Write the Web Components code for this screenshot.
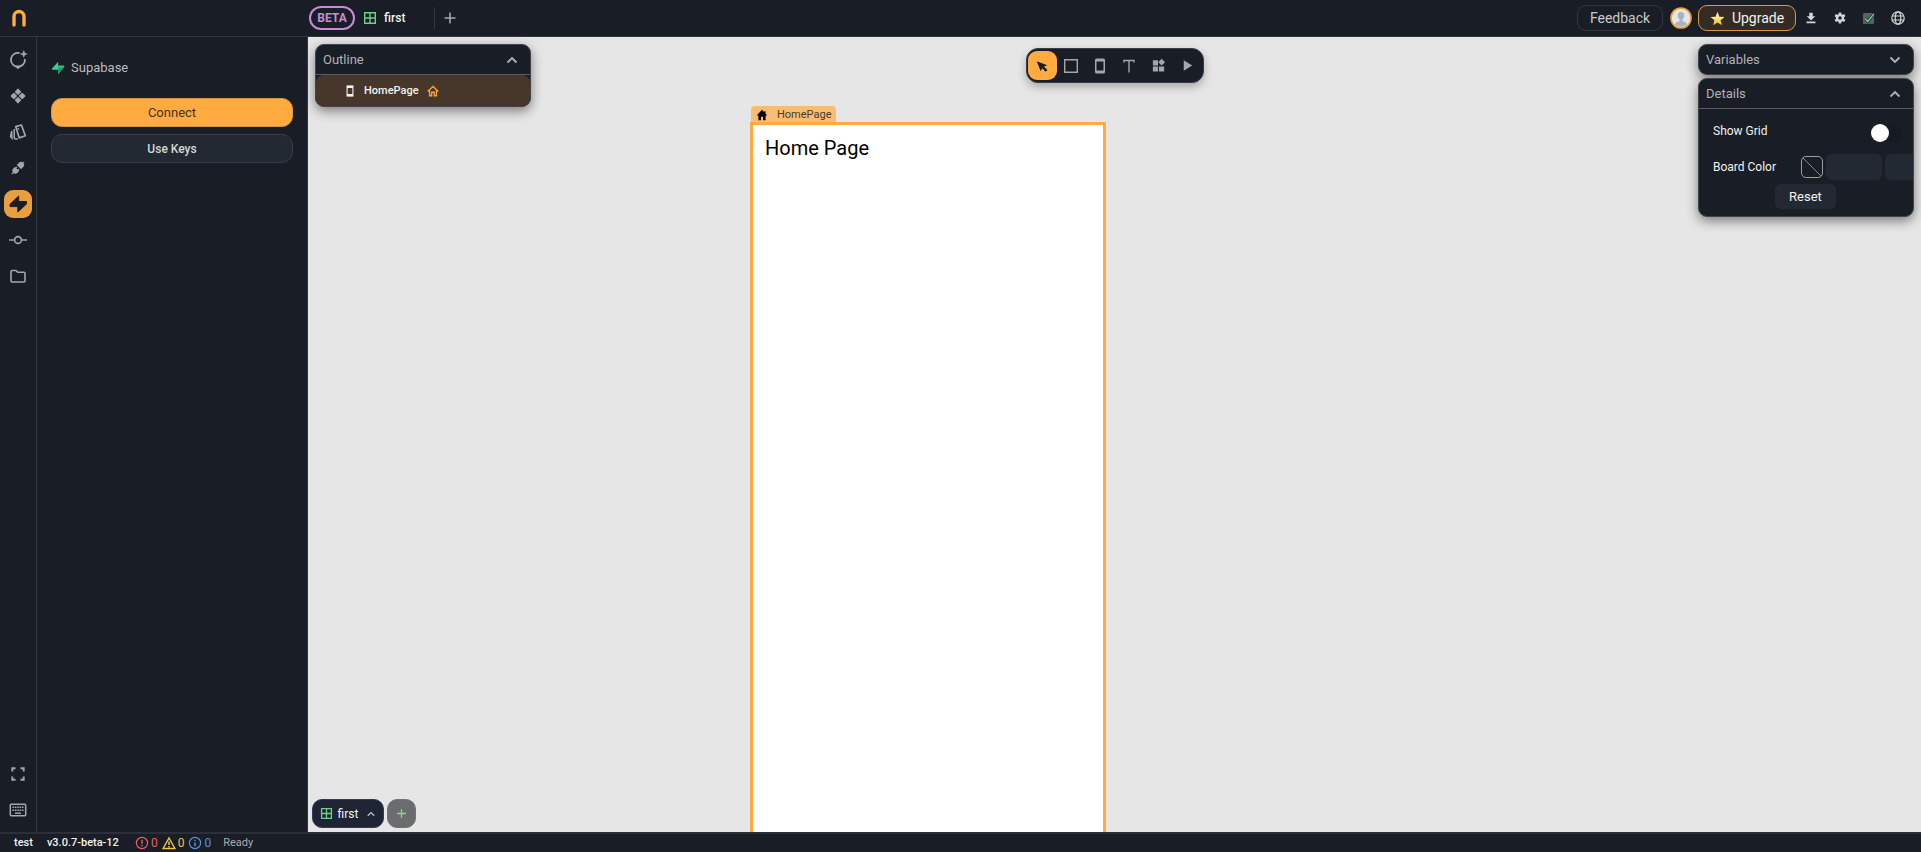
<!DOCTYPE html>
<html lang="en">
<head>
<meta charset="utf-8">
<title>first</title>
<style>
  html, body { height: 100%; margin: 0; }
  body {
    --bg: #191d25; --line: #33363f; --accent: #ffab40; --field: #232933; --muted: #a4a6a8; --text: #f2f2f0;
    background: #e6e6e6; color: var(--text);
    font-family: Roboto, "Liberation Sans", sans-serif; font-size: 13px; line-height: 16px;
    overflow: hidden;
  }
</style>
</head>
<body>
<app-shell></app-shell>

<script>
// every glyph lives here, name -> [viewBox, markup]
const ICONS = {
  logo: ['0 0 14 18', '<path d="M2 16V7.5a5 5 0 0 1 10 0V16" fill="none" stroke="currentColor" stroke-width="3.4" stroke-linecap="round"/>'],
  chat: ['0 0 18 18', '<path d="M10.500 2A7 7 0 1 0 15.900 8" fill="none" stroke="currentColor" stroke-width="1.8"/><path d="M5.500 14.800h7L9 18z M14.800-.5l1 2.500 2.500 1-2.500 1-1 2.500-1-2.500-2.500-1 2.500-1z" fill="currentColor" stroke="currentColor" stroke-width=".4"/>'],
  diamonds: ['0 0 18 18', '<path d="M9 1.300l3 3-3 3-3-3z M4.300 6l3 3-3 3-3-3z M13.700 6l3 3-3 3-3-3z M9 10.700l3 3-3 3-3-3z" fill="currentColor" stroke="currentColor" stroke-width="1.2" stroke-linejoin="round"/>'],
  cards: ['0 0 18 18', '<g fill="none" stroke="currentColor"><path d="M6.700 3.600L12.400 2 16.300 12.800 10.300 14.900z" stroke-width="1.700" stroke-linejoin="round"/><path d="M5.200 6v8.500q0 1.500 1.500 1.500h2" stroke-width="1.500"/><path d="M2.700 8L1.500 13.500l1.500 1.700z" stroke-width="1.400"/></g><circle cx="9.300" cy="5.800" r=".9" fill="currentColor"/>'],
  plug: ['0 0 18 18', '<g transform="rotate(45 9 9)" fill="currentColor"><path d="M8.100-4h1.800V-.5h-1.800z M9-2c2.600 0 4.500 1.500 4.500 4V7h-9V2c0-2.500 1.900-4 4.500-4z M5.800 9h1.800v2h2.800V9h1.800v2h1.300V15c0 2.500-1.900 4-4.500 4s-4.500-1.500-4.500-4v-4h1.300z M8.100 18.500h1.800v3.500h-1.800z"/></g>'],
  bolt: ['0 0 18 18', '<path d="M9.700 1L1 9.200V11.600h7.800V17L17.500 9V6.500H9.700z" fill="#191d25" stroke="#191d25" stroke-linejoin="round"/>'],
  commit: ['0 0 18 18', '<path d="M0 9h5.500M12.500 9H18" stroke="currentColor" stroke-width="1.600"/><circle cx="9" cy="9" r="3.400" fill="none" stroke="currentColor" stroke-width="1.600"/>'],
  folder: ['0 0 18 18', '<path d="M2 14V4.500q0-1 1-1h4l1.700 1.700H15q1 0 1 1V14q0 1-1 1H3q-1 0-1-1z" fill="none" stroke="currentColor" stroke-width="1.600"/>'],
  expand: ['0 0 18 18', '<path d="M3.300 6.500V3.300h3.200M11.500 3.300h3.200v3.200M14.700 11.500v3.200h-3.200M6.500 14.700H3.300v-3.200" fill="none" stroke="currentColor" stroke-width="1.900"/>'],
  keyboard: ['0 0 18 18', '<rect x="1.300" y="3.300" width="15.400" height="11.400" rx="1" fill="none" stroke="currentColor" stroke-width="1.500"/><path d="M3.500 6.300h11M3.500 9.300h11" stroke="currentColor" stroke-width="1.600" stroke-dasharray="1.600 .75"/><path d="M6 12.200h6" stroke="currentColor" stroke-width="1.400"/>'],
  supabase: ['0 0 14 14', '<path d="M7.200.8L.8 7.700q-.5 1 .5 1H7.200z" fill="#3ecf8e"/><path d="M7.200 13.300V4.500H12.800q1 .2.400 1.200z" fill="#38bd82"/><path d="M7.200 13.300V9L9 6.500 12.500 7z" fill="#249361"/>'],
  grid: ['0 0 14 14', '<path d="M1.700 1.700h10.600v10.600H1.700z M7 1.700v10.600M1.700 7h10.600" fill="none" stroke="#6fd08c" stroke-width="1.400"/>'],
  plus: ['0 0 14 14', '<path d="M7 1.500v11M1.500 7h11" stroke="currentColor" stroke-width="1.600"/>'],
  up: ['0 0 14 14', '<path d="M2.500 9.500L7 5l4.500 4.500" fill="none" stroke="currentColor" stroke-width="1.800"/>'],
  down: ['0 0 14 14', '<path d="M2.500 4.500L7 9l4.500-4.500" fill="none" stroke="currentColor" stroke-width="1.800"/>'],
  phone: ['0 0 14 14', '<path d="M3.600 1.300h6.800v11.400H3.600z" fill="none" stroke="currentColor" stroke-width="1.300"/><path d="M3.500 1h7v2.500h-7z M3.500 10.500h7V13h-7z" fill="currentColor"/>'],
  homeLine: ['0 0 14 14', '<path d="M.8 7.500L7 1.800l6.200 5.700M3 6.500v6h2.500v-4h3v4H11v-6" fill="none" stroke="#f7a23b" stroke-width="1.600"/>'],
  home: ['0 0 14 14', '<path d="M7 1L.8 7.500h2V13h3V9h2.400v4h3V7.500h2L11.200 5.500V2.500H9.500v1.200z" fill="#000"/>'],
  star: ['0 0 16 16', '<defs><linearGradient id="g" x2="0" y2="1"><stop offset=".3" stop-color="#fff3a0"/><stop offset="1" stop-color="#f8b713"/></linearGradient></defs><path d="M8 .8l2 5.200 5.500.3-4.200 3.500 1.400 5.400L8 12.200l-4.700 3 1.400-5.400L.5 6.300 6 6z" fill="url(#g)"/>'],
  avatar: ['0 0 22 22', '<circle cx="11" cy="11" r="10" fill="#e3e6ea"/><path d="M11 5c2.300 0 3.300 1.500 3.300 3.500 0 2-1 3.500-2 4.200v1.300l4.200 1.800v2.200a10 10 0 0 1-11 0v-2.200l4.200-1.800v-1.300c-1-.7-2-2.200-2-4.200C7.700 6.500 8.700 5 11 5z" fill="#aab3bf"/><circle cx="11" cy="11" r="10" fill="none" stroke="#f29b38" stroke-width="1.700"/>'],
  download: ['0 0 14 14', '<path d="M5 .8h4V5h3L7 10 2 5h3z M1.800 11.200h10.400v2H1.800z" fill="currentColor"/>'],
  gear: ['0 0 14 14', '<circle cx="7" cy="7" r="3.400" fill="none" stroke="currentColor" stroke-width="2.800"/><path d="M7 .5v2.200M7 11.300v2.200M1.400 3.700l1.900 1.100M10.700 9.200l1.900 1.100M1.400 10.300l1.900-1.100M10.700 4.800l1.900-1.100" stroke="currentColor" stroke-width="3"/>'],
  check: ['0 0 14 14', '<rect x="1" y="1" width="12" height="12" rx="1.500" fill="#5b5f66"/><path d="M3 7l3.200 3.300L12.800 2" fill="none" stroke="#191d25" stroke-width="3"/><path d="M3 7l3.200 3.300L12.800 2" fill="none" stroke="#6ddd7c" stroke-width="1.600"/>'],
  globe: ['0 0 14 14', '<g fill="none" stroke="currentColor" stroke-width="1.200"><circle cx="7" cy="7" r="6.200"/><ellipse cx="7" cy="7" rx="2.800" ry="6.200"/><path d="M1.200 5h11.600M1.200 9h11.600"/></g>'],
  cursor: ['0 0 16 16', '<path d="M2 2.500l12 4.500-3.800 1.700 4 4-2 2-4-4L6.500 14z" fill="#191d25"/>'],
  square: ['0 0 16 16', '<path d="M1.700 1.700h12.600v12.600H1.700z" fill="none" stroke="currentColor" stroke-width="1.400"/>'],
  mobile: ['0 0 16 16', '<path d="M4.500.5h7q1.500 0 1.500 1.500v12q0 1.500-1.500 1.500h-7Q3 15.500 3 14V2Q3 .5 4.500.5z M4.500 3.500v9h7v-9z" fill="currentColor" fill-rule="evenodd"/>'],
  type: ['0 0 16 16', '<path d="M3 4.500V2.500h10v2M8 2.500v12" fill="none" stroke="currentColor" stroke-width="1.400"/>'],
  widgets: ['0 0 16 16', '<path d="M2 2.500h5.500V8H2z M2 9h5.500v5.500H2z M8.500 9H14v5.500H8.500z M11.300.7l3.700 3.700-3.700 3.700L7.800 4.400z" fill="currentColor"/>'],
  play: ['0 0 16 16', '<path d="M4 2.500L13 8l-9 5.500z" fill="currentColor"/>'],
  error: ['0 0 14 14', '<g fill="none" stroke="#ee5f66" stroke-width="1.200"><circle cx="7" cy="7" r="5.600"/><path d="M7 3.700v4M7 8.800v1.400" stroke-width="1.400"/></g>'],
  warn: ['0 0 14 14', '<path d="M7 2l5.900 10.500H1.100z" fill="none" stroke="#f3c24b" stroke-width="1.400"/><path d="M7 5.500v3.500M7 10v1.500" stroke="#f3c24b" stroke-width="1.500"/>'],
  info: ['0 0 14 14', '<g fill="none" stroke="#5d8fe0" stroke-width="1.200"><circle cx="7" cy="7" r="5.600"/><path d="M7 3.700v1.400M7 6.300v4" stroke-width="1.400"/></g>'],
};

function define(name, html, setup) {
  const template = document.createElement('template');
  template.innerHTML = html;
  customElements.define(name, class extends HTMLElement {
    constructor() {
      super();
      this.attachShadow({ mode: 'open' }).append(template.content.cloneNode(true));
    }
    connectedCallback() {
      if (setup) setup(this, this.shadowRoot);
    }
  });
}

function makeIcon(name, size) {
  const icon = document.createElement('ui-icon');
  icon.setAttribute('name', name);
  icon.setAttribute('size', size);
  return icon;
}

define('ui-icon', '<style>:host{display:block;flex:none;line-height:0}svg{display:block;overflow:visible}</style><span></span>', (el, root) => {
  const [box, body] = ICONS[el.getAttribute('name')];
  const size = el.getAttribute('size') || 14;
  root.querySelector('span').innerHTML = `<svg viewBox="${box}" width="${size}" height="${size}" aria-hidden="true">${body}</svg>`;
});

// icon-only button, used in the rail, toolbar and top bar
define('icon-button', `
<style>
  :host { display: grid; place-items: center; width: 29px; height: 29px; color: var(--muted); flex: none; }
  button { display: grid; place-items: center; width: 100%; height: 100%; padding: 0; border: 0; background: none; color: inherit; }
  :host([active]) button { background: var(--accent); border-radius: 9px; }
</style>
<button></button>`, (el, root) => {
  const button = root.querySelector('button');
  button.setAttribute('aria-label', el.getAttribute('label'));
  button.replaceChildren(makeIcon(el.getAttribute('icon'), el.getAttribute('size') || 16));
});

define('top-bar', `
<style>
  :host { display: flex; align-items: center; height: 36px; border-bottom: 1px solid var(--line); background: var(--bg); }
  .logo { width: 309px; box-sizing: border-box; padding-left: 10px; flex: none; color: var(--accent); }
  .beta { box-sizing: border-box; width: 46px; height: 24px; border: 2px solid #c88ad8; border-radius: 12px; color: #c88ad8; font-weight: 700; font-size: 12px; line-height: 20px; text-align: center; }
  .tab { display: flex; align-items: center; gap: 7px; width: 71px; height: 22px; margin-left: 8px; border-right: 1px solid var(--line); font-size: 12px; font-weight: 500; }
  .add { color: var(--muted); }
  .right { display: flex; align-items: center; margin-left: auto; padding-right: 9px; }
  button { box-sizing: border-box; height: 26px; border: 1px solid var(--line); border-radius: 9px; background: var(--bg); color: #c9cacb; font: 14px/16px Roboto, sans-serif; padding: 0; }
  .feedback { width: 86px; margin-right: 7px; }
  .upgrade { display: flex; align-items: center; justify-content: center; gap: 7px; width: 98px; margin-left: 6px; border-color: #e3963a; background: #342b24; color: var(--text); }
  .right icon-button { color: #d6d6d6; }
</style>
<div class="logo"><ui-icon name="logo" size="18"></ui-icon></div>
<div class="beta">BETA</div>
<div class="tab"><ui-icon name="grid"></ui-icon>first</div>
<icon-button class="add" icon="plus" size="14" label="New tab"></icon-button>
<div class="right">
  <button class="feedback">Feedback</button>
  <ui-icon name="avatar" size="22"></ui-icon>
  <button class="upgrade"><ui-icon name="star" size="15"></ui-icon>Upgrade</button>
  <icon-button icon="download" size="12" label="Download"></icon-button>
  <icon-button icon="gear" size="12" label="Settings"></icon-button>
  <icon-button icon="check" size="13" label="Saved"></icon-button>
  <icon-button icon="globe" size="14" label="Publish"></icon-button>
</div>`);

define('side-rail', `
<style>
  :host { display: flex; flex-direction: column; box-sizing: border-box; width: 37px; padding: 9px 5px 8px 4px; gap: 8px; border-right: 1px solid var(--line); background: var(--bg); }
  icon-button { width: 28px; height: 28px; }
  icon-button[active] { --accent: #e99f3f; }
  .last { margin-top: auto; }
</style>
<icon-button icon="chat" size="18" label="Assistant"></icon-button>
<icon-button icon="diamonds" label="Components"></icon-button>
<icon-button icon="cards" size="18" label="Styles"></icon-button>
<icon-button icon="plug" size="12" label="Connections"></icon-button>
<icon-button icon="bolt" size="18" label="Supabase" active></icon-button>
<icon-button icon="commit" size="18" label="Versions"></icon-button>
<icon-button icon="folder" size="18" label="Files"></icon-button>
<icon-button class="last" icon="expand" size="18" label="Full screen"></icon-button>
<icon-button icon="keyboard" size="18" label="Shortcuts"></icon-button>`);

define('supabase-panel', `
<style>
  :host { display: flex; flex-direction: column; gap: 7px; box-sizing: border-box; width: 271px; padding: 22px 14px; border-right: 1px solid var(--line); background: var(--bg); }
  h2 { display: flex; align-items: center; gap: 6px; margin: 0 0 15px; height: 17px; color: #bbbcbd; font-size: 13px; font-weight: 400; }
  button { height: 29px; box-sizing: border-box; border: 1px solid #383b44; border-radius: 11px; background: var(--field); color: #d6d6d6; font: 500 12px/16px Roboto, sans-serif; }
  .primary { border-color: #d49545; background: var(--accent); color: #3b332c; font-weight: 400; font-size: 13px; }
</style>
<h2><ui-icon name="supabase"></ui-icon>Supabase</h2>
<button class="primary">Connect</button>
<button>Use Keys</button>`);

// floating collapsible card
define('float-card', `
<style>
  :host { display: block; box-sizing: border-box; border: 1px solid #41444c; border-radius: 9px; background: var(--bg); overflow: hidden; box-shadow: 0 4px 12px #0007; }
  header { display: flex; align-items: center; justify-content: space-between; height: 29px; padding: 0 11px 0 7px; color: #b1b2b4; font-size: 13px; }
  .body { border-top: 1px solid #5b5d63; }
  :host(:not([open])) .body { display: none; }
</style>
<header><span></span></header>
<div class="body"><slot></slot></div>`, (el, root) => {
  root.querySelector('span').textContent = el.getAttribute('heading');
  root.querySelector('header').append(makeIcon(el.hasAttribute('open') ? 'up' : 'down', 14));
});

define('outline-card', `
<style>
  :host { display: block; }
  .row { display: flex; align-items: center; height: 31px; padding-left: 28px; gap: 8px; border-radius: 8px; background: #47372b; font-size: 11px; font-weight: 500; }
</style>
<float-card heading="Outline" open><div class="row"><ui-icon name="phone" size="12"></ui-icon>HomePage<ui-icon name="homeLine" size="12"></ui-icon></div></float-card>`);

define('details-cards', `
<style>
  :host { display: flex; flex-direction: column; gap: 3px; }
  .rows { display: flex; flex-direction: column; gap: 2px; padding: 5px 0 7px; }
  .row { display: flex; align-items: center; height: 34px; padding-left: 14px; font-size: 12px; }
  .pick { margin-bottom: -2px; }
  label { flex: none; width: 88px; }
  .toggle { appearance: none; display: flex; width: 31px; height: 18px; margin: 3px 11px 0 auto; border-radius: 9px; background: #161a21; }
  .toggle::before { content: ""; width: 18px; height: 18px; border-radius: 50%; background: #fff; }
  .swatch { flex: none; box-sizing: border-box; width: 22px; height: 22px; padding: 0; border: 1px solid #9b9c9e; border-radius: 5px; background: linear-gradient(to top right, transparent 48%, #85878a 49%, #85878a 51%, transparent 52%); }
  .text { flex: none; box-sizing: border-box; width: 56px; height: 26px; margin-left: 3px; border: 0; border-radius: 6px; background: var(--field); }
  .reset { width: 61px; height: 25px; margin-left: 76px; border: 0; border-radius: 6px; background: var(--field); color: var(--text); font: 13px/16px Roboto, sans-serif; }
</style>
<float-card heading="Variables"></float-card>
<float-card heading="Details" open>
  <div class="rows">
    <div class="row"><label for="grid">Show Grid</label><input class="toggle" type="checkbox" id="grid"></div>
    <div class="row pick"><label for="hex">Board Color</label><button class="swatch" aria-label="Pick color"></button><input class="text" id="hex"><input class="text" aria-label="Opacity"></div>
    <button class="reset">Reset</button>
  </div>
</float-card>`);

define('tool-bar', `
<style>
  :host { display: flex; padding: 2px 1px; border: 1px solid #3a3d45; border-radius: 12px; background: var(--bg); box-shadow: 0 4px 8px #0004; }
</style>
<icon-button icon="cursor" size="14" label="Select" active></icon-button>
<icon-button icon="square" label="Box"></icon-button>
<icon-button icon="mobile" label="Page"></icon-button>
<icon-button icon="type" label="Text"></icon-button>
<icon-button icon="widgets" size="15" label="Widgets"></icon-button>
<icon-button icon="play" size="15" label="Run"></icon-button>`);

define('page-node', `
<style>
  :host { display: flex; flex-direction: column; align-items: flex-start; color: #000; }
  .tag { display: flex; align-items: center; gap: 9px; box-sizing: border-box; height: 16px; margin-left: 1px; padding: 1px 5px 0; border-radius: 4px 4px 0 0; background: #f8bd72; color: #4b3b28; font-size: 11px; }
  .frame { box-sizing: border-box; width: 100%; flex: 1; padding: 11px 12px; border: solid var(--accent); border-width: 3px 3px 0; background: #fff; font-size: 20px; line-height: 24px; }
</style>
<div class="tag"><ui-icon name="home" size="12"></ui-icon>HomePage</div>
<div class="frame">Home Page</div>`);

define('board-tabs', `
<style>
  :host { display: flex; gap: 3px; }
  button { display: flex; align-items: center; justify-content: center; box-sizing: border-box; height: 29px; padding: 0; border: 1px solid #2c3a66; border-radius: 10px; background: #1e2433; color: var(--text); font: 12px/16px Roboto, sans-serif; }
  .board { width: 72px; gap: 5px; }
  .board ui-icon:last-child { margin-left: 3px; color: #c2c3c6; }
  .add { width: 29px; border-color: #737475; background: #6b6c6d; color: #8fd6a0; }
</style>
<button class="board"><ui-icon name="grid" size="13"></ui-icon>first<ui-icon name="up" size="10"></ui-icon></button>
<button class="add" aria-label="Add board"><ui-icon name="plus" size="11"></ui-icon></button>`);

define('board-canvas', `
<style>
  :host { display: block; position: relative; flex: 1; min-width: 0; overflow: hidden; background: #e6e6e6; }
  /* everything here floats over the free canvas */
  page-node { position: absolute; left: 442px; top: 69px; bottom: 0; width: 356px; }
  outline-card { position: absolute; left: 7px; top: 7px; width: 216px; }
  details-cards { position: absolute; right: 7px; top: 7px; width: 216px; }
  tool-bar { position: absolute; left: 50%; top: 11px; transform: translateX(-50%); }
  board-tabs { position: absolute; left: 4px; bottom: 4px; }
</style>
<page-node></page-node>
<outline-card></outline-card>
<tool-bar></tool-bar>
<details-cards></details-cards>
<board-tabs></board-tabs>`);

define('status-bar', `
<style>
  :host { display: flex; align-items: center; box-sizing: border-box; height: 20px; padding-left: 14px; gap: 14px; border-top: 2px solid #2c2f37; background: var(--bg); font-size: 11px; font-weight: 500; }
  .counts { display: flex; align-items: center; gap: 2px; padding-left: 2px; font-size: 12px; font-weight: 400; }
  .err { color: #ee5f66; } .wrn { color: #f3c24b; } .inf { color: #5d8fe0; }
  .counts span { padding-right: 2px; }
  .ready { color: #a9abad; font-size: 11px; font-weight: 400; margin-left: -4px; }
</style>
<span>test</span><span>v3.0.7-beta-12</span>
<div class="counts">
  <ui-icon name="error"></ui-icon><span class="err">0</span>
  <ui-icon name="warn"></ui-icon><span class="wrn">0</span>
  <ui-icon name="info"></ui-icon><span class="inf">0</span>
</div>
<span class="ready">Ready</span>`);

define('app-shell', `
<style>
  :host { display: flex; flex-direction: column; height: 100vh; }
  main { display: flex; flex: 1; min-height: 0; }
</style>
<top-bar></top-bar>
<main><side-rail></side-rail><supabase-panel></supabase-panel><board-canvas></board-canvas></main>
<status-bar></status-bar>`);
</script>
</body>
</html>
